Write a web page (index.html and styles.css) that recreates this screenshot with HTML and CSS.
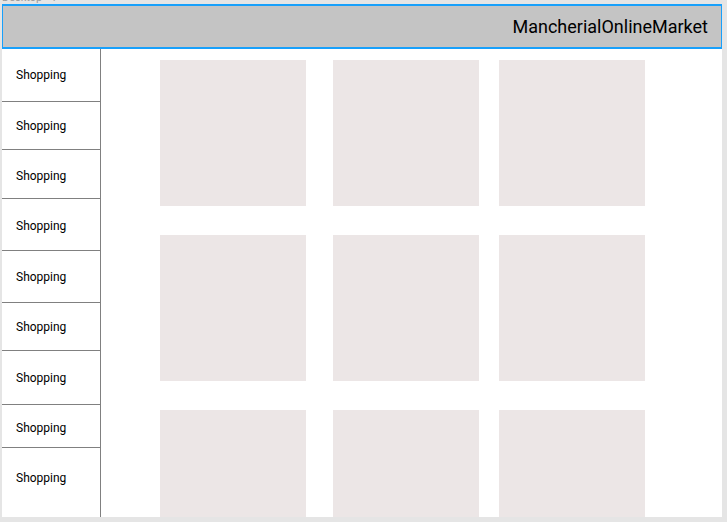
FILE: index.html
```html
<!DOCTYPE html>
<html>
<head>
<meta charset="utf-8">
<link rel="stylesheet" href="styles.css">
</head>
<body>
<div class="frame-label"><span>Desktop - 1</span></div>
<div class="frame">
  <header class="topbar">MancherialOnlineMarket</header>
  <div class="content">
    <nav class="sidebar">
      <div class="item">Shopping</div>
      <div class="item">Shopping</div>
      <div class="item">Shopping</div>
      <div class="item">Shopping</div>
      <div class="item">Shopping</div>
      <div class="item">Shopping</div>
      <div class="item">Shopping</div>
      <div class="item">Shopping</div>
      <div class="item">Shopping</div>
    </nav>
    <main class="grid">
      <div class="tile"></div><div class="tile"></div><div class="tile"></div>
      <div class="tile"></div><div class="tile"></div><div class="tile"></div>
      <div class="tile"></div><div class="tile"></div><div class="tile"></div>
    </main>
  </div>
</div>
</body>
</html>
```
FILE: styles.css
```css
html, body {
  margin: 0;
  padding: 0;
  background: #e5e5e5;
  font-family: Roboto, "Liberation Sans", sans-serif;
  overflow: hidden;
}
.frame-label {
  height: 4px;
  overflow: hidden;
  padding-left: 2px;
  font-size: 11px;
  color: #9a9a9a;
  line-height: 11px;
}
.frame-label span {
  display: block;
  margin-top: -8px;
}
.frame {
  margin-left: 2px;
  width: 720px;
  height: 513px;
  background: #fff;
  display: flex;
  flex-direction: column;
  overflow: hidden;
}
.topbar {
  margin: 0 -1px;
  height: 45px;
  box-sizing: border-box;
  border: 2px solid #18a0fb;
  background: #c4c4c4;
  display: flex;
  align-items: center;
  justify-content: flex-end;
  padding-right: 13px;
  font-size: 18px;
  color: #000;
  flex: none;
}
.content {
  flex: 1;
  display: flex;
  min-height: 0;
}
.sidebar {
  width: 98px;
  flex: none;
  border-right: 1px solid #808080;
  display: flex;
  flex-direction: column;
}
.item {
  box-sizing: content-box;
  display: flex;
  align-items: center;
  padding-left: 14px;
  font-size: 12px;
  color: #000;
  border-bottom: 1px solid #808080;
  margin-right: -1px;
}
.item:nth-child(1) { height: 52px; }
.item:nth-child(2) { height: 47px; }
.item:nth-child(3) { height: 44px; padding-top: 4px; }
.item:nth-child(4) { height: 49px; padding-top: 2px; }
.item:nth-child(5) { height: 50px; padding-top: 1px; }
.item:nth-child(6) { height: 47px; }
.item:nth-child(7) { height: 53px; }
.item:nth-child(8) { height: 38px; padding-top: 4px; }
.item:nth-child(9) { height: 60px; border-bottom: none; padding-bottom: 9px; }
.grid {
  flex: 1;
  display: grid;
  grid-template-columns: 173px 166px 146px;
  grid-auto-rows: 146px;
  row-gap: 29px;
  padding: 11px 0 0 59px;
  align-content: start;
  overflow: hidden;
}
.tile {
  width: 146px;
  height: 146px;
  background: #ece6e6;
}
```
